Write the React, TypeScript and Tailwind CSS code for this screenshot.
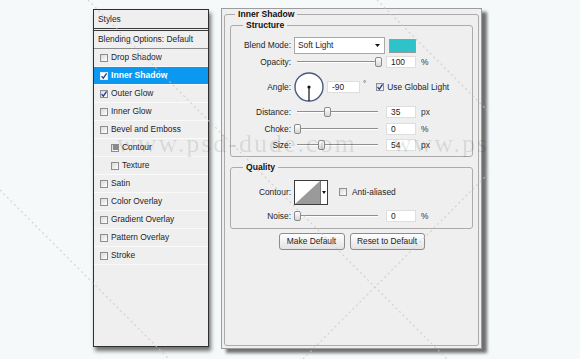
import React from "react";

type Row = { label: string; checked?: boolean; active?: boolean; sub?: boolean; partial?: boolean };

const rows: Row[] = [
  { label: "Drop Shadow" },
  { label: "Inner Shadow", checked: true, active: true },
  { label: "Outer Glow", checked: true },
  { label: "Inner Glow" },
  { label: "Bevel and Emboss" },
  { label: "Contour", sub: true, partial: true },
  { label: "Texture", sub: true },
  { label: "Satin" },
  { label: "Color Overlay" },
  { label: "Gradient Overlay" },
  { label: "Pattern Overlay" },
  { label: "Stroke" },
];

function Check({ checked, partial, active }: { checked?: boolean; partial?: boolean; active?: boolean }) {
  return (
    <span
      className={
        "flex h-2 w-2 shrink-0 items-center justify-center border " +
        (active ? "border-[#d8ecff] bg-white" : "border-[#8e8e8e] bg-linear-to-br from-[#d9d9d9] to-white")
      }
    >
      {checked && (
        <svg width="6" height="6" viewBox="0 0 6 6">
          <path d="M0.6 3.1 L2.3 5.2 L5.6 0.4" fill="none" stroke="#1f3c9e" strokeWidth="1.3" />
        </svg>
      )}
      {partial && <span className="h-[5px] w-[5px] bg-[#8a8a8a]" />}
    </span>
  );
}

function Slider({ pos }: { pos: number }) {
  return (
    <div className="relative h-[14px] w-[88px] shrink-0">
      <div className="absolute left-[3px] right-[4px] top-[6px] h-[2px] border-t border-b border-t-[#8f8f8f] border-b-white" />
      <div
        className="absolute top-[2px] h-[10px] w-[7px] rounded-[2px] border border-[#8a8a8a] bg-linear-to-b from-white to-[#d6d6d6]"
        style={{ left: pos }}
      />
    </div>
  );
}

function Field({ value, w = 30 }: { value: string; w?: number }) {
  return (
    <div
      className="flex h-[12px] shrink-0 items-center border border-[#dedede] bg-white pl-[4px] text-[8.4px] text-[#222]"
      style={{ width: w }}
    >
      {value}
    </div>
  );
}

function Label({ text }: { text: string }) {
  return <div className="w-[61px] shrink-0 pr-[1px] text-right text-[8.4px] text-[#1e1e1e]">{text}</div>;
}

function SliderRow({ label, pos, value, unit, cls }: { label: string; pos: number; value: string; unit: string; cls: string }) {
  return (
    <div className={"flex h-[14px] items-center " + cls}>
      <Label text={label} />
      <div className="ml-[2px] flex items-center">
        <Slider pos={pos} />
        <div className="ml-[4px]">
          <Field value={value} />
        </div>
        <span className="ml-[5px] text-[8.4px] text-[#333]">{unit}</span>
      </div>
    </div>
  );
}

function Legend({ text, ml }: { text: string; ml: string }) {
  return <legend className={"px-[3px] text-[8.6px] font-bold leading-[11px] text-[#111] " + ml}>{text}</legend>;
}

export default function App() {
  return (
    <div className="relative h-[359px] w-[580px] overflow-hidden bg-[#f5f9f9] font-['Liberation_Sans',Arial,sans-serif]">
      <div className="flex items-start pl-[93px]">
        {/* Left: styles list */}
        <div className="mt-[9px] flex h-[338px] w-[116px] shrink-0 flex-col border border-[#2f2f2f] bg-[#efefef] shadow-[2px_4px_4px_rgba(0,0,0,0.55)]">
          <div className="flex h-[21px] items-center border-b-[3px] border-double border-[#3a3a3a] pl-[4px] text-[8.4px] text-[#1e1e1e]">
            Styles
          </div>
          <div className="flex h-[18px] items-center border-b border-[#8c8c8c] pl-[4px] text-[8.4px] text-[#1e1e1e]">
            Blending Options: Default
          </div>
          {rows.map((r) => (
            <div
              key={r.label}
              className={
                "flex h-[18px] items-center gap-[3px] border-b border-[#fafafa] " +
                (r.sub ? "pl-[17px] " : "pl-[6px] ") +
                (r.active ? "bg-[#0b98f0] font-bold text-white" : "text-[#1e1e1e]")
              }
            >
              <Check checked={r.checked} partial={r.partial} active={r.active} />
              <span className={r.active ? "text-[8.6px]" : "text-[8.4px]"}>{r.label}</span>
            </div>
          ))}
        </div>

        {/* Right: settings */}
        <div className="ml-[12px] mt-[8px] flex h-[341px] w-[261px] shrink-0 flex-col border border-[#9c9c9c] bg-[#efefef] shadow-[5px_4px_3px_rgba(0,0,0,0.55)]">
          <fieldset className="mx-[2px] mb-[2px] flex flex-1 flex-col rounded-[3px] border border-[#ababab]">
            <Legend text="Inner Shadow" ml="ml-[10px]" />

            <fieldset className="mx-[5px] rounded-[3px] border border-[#ababab] pb-[4px] pt-[6px]">
              <Legend text="Structure" ml="ml-[12px]" />
              {/* Blend mode */}
              <div className="flex h-[17px] items-center">
                <Label text="Blend Mode:" />
                <div className="ml-[2px] flex h-[17px] w-[91px] items-center justify-between border border-[#a8a8a8] bg-white pl-[3px] pr-[4px] text-[8.4px] text-[#1e1e1e]">
                  <span>Soft Light</span>
                  <svg width="5" height="3" viewBox="0 0 5 3">
                    <path d="M0 0 H5 L2.5 3 Z" fill="#111" />
                  </svg>
                </div>
                <div className="ml-[4px] h-[14px] w-[27px] border border-[#9a9a9a] bg-[#2ec3c9]" />
              </div>
              {/* Opacity */}
              <SliderRow label="Opacity:" pos={81} value="100" unit="%" cls="mt-[1px]" />
              {/* Angle */}
              <div className="mt-[3px] flex h-[30px] items-center">
                <Label text="Angle:" />
                <svg className="ml-[2px] shrink-0" width="30" height="30" viewBox="0 0 30 30">
                  <circle cx="15" cy="15" r="14" fill="#ffffff" stroke="#4a5a80" strokeWidth="1.4" />
                  <line x1="15" y1="15" x2="15" y2="29" stroke="#111" strokeWidth="1.2" />
                  <circle cx="15" cy="15" r="1.6" fill="#111" />
                </svg>
                <div className="ml-[3px]">
                  <Field value="-90" w={33} />
                </div>
                <span className="ml-[3px] self-start pt-[8px] text-[8px] leading-none text-[#333]">°</span>
                <div className="ml-[10px] flex items-center gap-[3px]">
                  <Check checked />
                  <span className="text-[8.4px] text-[#1e1e1e]">Use Global Light</span>
                </div>
              </div>
              <SliderRow label="Distance:" pos={30} value="35" unit="px" cls="mt-[3px]" />
              <SliderRow label="Choke:" pos={0} value="0" unit="%" cls="mt-[3px]" />
              <SliderRow label="Size:" pos={24} value="54" unit="px" cls="mt-[2px]" />
            </fieldset>

            <fieldset className="mx-[5px] mt-[5px] rounded-[3px] border border-[#ababab] pb-[5px] pt-[7px]">
              <Legend text="Quality" ml="ml-[12px]" />
              <div className="flex h-[25px] items-center">
                <Label text="Contour:" />
                <div className="ml-[2px] flex h-[25px] w-[34px] shrink-0 border border-[#3c3c3c] bg-white">
                  <svg width="25" height="23" viewBox="0 0 25 23" className="shrink-0">
                    <polygon points="0,23 25,0 25,23" fill="#9a9a9a" />
                  </svg>
                  <div className="flex flex-1 items-center justify-center border-l border-[#777]">
                    <svg width="4" height="3" viewBox="0 0 4 3">
                      <path d="M0 0 H4 L2 3 Z" fill="#111" />
                    </svg>
                  </div>
                </div>
                <div className="ml-[11px] flex items-center gap-[5px]">
                  <Check />
                  <span className="text-[8.4px] text-[#1e1e1e]">Anti-aliased</span>
                </div>
              </div>
              <SliderRow label="Noise:" pos={0} value="0" unit="%" cls="mt-[4px]" />
            </fieldset>

            <div className="mt-[4px] flex justify-center gap-[5px]">
              <div className="flex h-[17px] w-[66px] items-center justify-center rounded-[3px] border border-[#8c8c8c] bg-linear-to-b from-white to-[#e2e2e2] text-[8.4px] text-[#222]">
                Make Default
              </div>
              <div className="flex h-[17px] w-[75px] items-center justify-center rounded-[3px] border border-[#8c8c8c] bg-linear-to-b from-white to-[#e2e2e2] text-[8.4px] text-[#222]">
                Reset to Default
              </div>
            </div>
          </fieldset>
        </div>
      </div>

      {/* watermark */}
      <div className="pointer-events-none absolute left-0 top-0 h-[359px] w-[500px] overflow-hidden">
        <svg className="absolute left-0 top-0" width="490" height="359" viewBox="0 0 490 359">
          <g stroke="#c9c9c9" strokeWidth="1.2" strokeDasharray="2 3" opacity="0.75">
            <line x1="88" y1="0" x2="447" y2="359" />
            <line x1="377" y1="0" x2="490" y2="113" />
            <line x1="0" y1="190" x2="169" y2="359" />
            <line x1="303" y1="359" x2="490" y2="172" />
          </g>
        </svg>
        <div className="absolute left-[117px] top-[131px] flex whitespace-nowrap font-['Liberation_Serif',serif] text-[26px] leading-[26px] tracking-[2px] text-black/[0.11]">
          <span>www.psd-dude.com</span>
          <span className="ml-[36px]">www.ps</span>
        </div>
      </div>
    </div>
  );
}
